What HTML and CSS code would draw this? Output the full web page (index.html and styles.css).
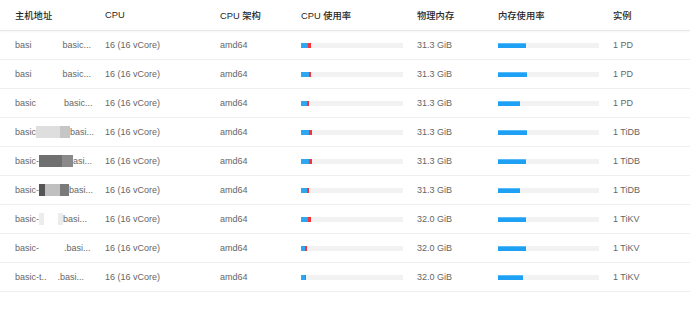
FILE: index.html
```html
<!DOCTYPE html>
<html lang="zh">
<head>
<meta charset="utf-8">
<title>Hosts</title>
<link rel="stylesheet" href="styles.css">
</head>
<body>
<div class="table">
  <div class="row head">
    <div class="cell first">主机地址</div>
    <div class="cell">CPU</div>
    <div class="cell">CPU 架构</div>
    <div class="cell">CPU 使用率</div>
    <div class="cell">物理内存</div>
    <div class="cell">内存使用率</div>
    <div class="cell">实例</div>
  </div>

  <div class="row">
    <div class="cell first host"><span>basi</span><span class="redact r-white w1"></span><span>basic...</span></div>
    <div class="cell">16 (16 vCore)</div>
    <div class="cell">amd64</div>
    <div class="cell"><div class="track cpu"><span class="seg blue" style="width:7px"></span><span class="seg red" style="width:3px"></span></div></div>
    <div class="cell">31.3 GiB</div>
    <div class="cell"><div class="track mem"><span class="seg mblue" style="width:28px"></span></div></div>
    <div class="cell">1 PD</div>
  </div>

  <div class="row">
    <div class="cell first host"><span>basi</span><span class="redact r-white w1"></span><span>basic...</span></div>
    <div class="cell">16 (16 vCore)</div>
    <div class="cell">amd64</div>
    <div class="cell"><div class="track cpu"><span class="seg blue" style="width:8px"></span><span class="seg red" style="width:2px"></span></div></div>
    <div class="cell">31.3 GiB</div>
    <div class="cell"><div class="track mem"><span class="seg mblue" style="width:29px"></span></div></div>
    <div class="cell">1 PD</div>
  </div>

  <div class="row">
    <div class="cell first host"><span>basic</span><span class="redact r-white w2"></span><span>basic...</span></div>
    <div class="cell">16 (16 vCore)</div>
    <div class="cell">amd64</div>
    <div class="cell"><div class="track cpu"><span class="seg blue" style="width:6px"></span><span class="seg red" style="width:2px"></span></div></div>
    <div class="cell">31.3 GiB</div>
    <div class="cell"><div class="track mem"><span class="seg mblue" style="width:22px"></span></div></div>
    <div class="cell">1 PD</div>
  </div>

  <div class="row">
    <div class="cell first host"><span>basic</span><span class="redact w3"><i class="px g-e0" style="width:24px"></i><i class="px g-c4" style="width:10px"></i></span><span>basi...</span></div>
    <div class="cell">16 (16 vCore)</div>
    <div class="cell">amd64</div>
    <div class="cell"><div class="track cpu"><span class="seg blue" style="width:8px"></span><span class="seg red" style="width:3px"></span></div></div>
    <div class="cell">31.3 GiB</div>
    <div class="cell"><div class="track mem"><span class="seg mblue" style="width:29px"></span></div></div>
    <div class="cell">1 TiDB</div>
  </div>

  <div class="row">
    <div class="cell first host"><span>basic-</span><span class="redact w4"><i class="px g-70" style="width:23px"></i><i class="px g-8a" style="width:11px"></i></span><span>asi...</span></div>
    <div class="cell">16 (16 vCore)</div>
    <div class="cell">amd64</div>
    <div class="cell"><div class="track cpu"><span class="seg blue" style="width:8px"></span><span class="seg red" style="width:3px"></span></div></div>
    <div class="cell">31.3 GiB</div>
    <div class="cell"><div class="track mem"><span class="seg mblue" style="width:28px"></span></div></div>
    <div class="cell">1 TiDB</div>
  </div>

  <div class="row">
    <div class="cell first host"><span>basic-</span><span class="redact w5"><i class="px g-55" style="width:6px"></i><i class="px g-bf" style="width:15px"></i><i class="px g-78" style="width:9px"></i></span><span>basi...</span></div>
    <div class="cell">16 (16 vCore)</div>
    <div class="cell">amd64</div>
    <div class="cell"><div class="track cpu"><span class="seg blue" style="width:6px"></span><span class="seg red" style="width:2px"></span></div></div>
    <div class="cell">31.3 GiB</div>
    <div class="cell"><div class="track mem"><span class="seg mblue" style="width:22px"></span></div></div>
    <div class="cell">1 TiDB</div>
  </div>

  <div class="row">
    <div class="cell first host"><span>basic-</span><span class="redact w6"><i class="px g-ea" style="width:5px"></i><i class="px g-fff" style="width:14px"></i><i class="px g-ea" style="width:5px"></i></span><span>basi...</span></div>
    <div class="cell">16 (16 vCore)</div>
    <div class="cell">amd64</div>
    <div class="cell"><div class="track cpu"><span class="seg blue" style="width:7px"></span><span class="seg red" style="width:3px"></span></div></div>
    <div class="cell">32.0 GiB</div>
    <div class="cell"><div class="track mem"><span class="seg mblue" style="width:28px"></span></div></div>
    <div class="cell">1 TiKV</div>
  </div>

  <div class="row">
    <div class="cell first host"><span>basic-</span><span class="redact r-white w7"></span><span>.basi...</span></div>
    <div class="cell">16 (16 vCore)</div>
    <div class="cell">amd64</div>
    <div class="cell"><div class="track cpu"><span class="seg blue" style="width:4px"></span><span class="seg red" style="width:2px"></span></div></div>
    <div class="cell">32.0 GiB</div>
    <div class="cell"><div class="track mem"><span class="seg mblue" style="width:28px"></span></div></div>
    <div class="cell">1 TiKV</div>
  </div>

  <div class="row">
    <div class="cell first host"><span>basic-t..</span><span class="redact r-white w8"></span><span>.basi...</span></div>
    <div class="cell">16 (16 vCore)</div>
    <div class="cell">amd64</div>
    <div class="cell"><div class="track cpu"><span class="seg blue" style="width:4px"></span><span class="seg purple" style="width:1px"></span></div></div>
    <div class="cell">32.0 GiB</div>
    <div class="cell"><div class="track mem"><span class="seg mblue" style="width:25px"></span></div></div>
    <div class="cell">1 TiKV</div>
  </div>
</div>
</body>
</html>
```

FILE: styles.css
```css
html, body {
  margin: 0;
  padding: 0;
  background: #ffffff;
}

body {
  font-family: "Liberation Sans", "Noto Sans CJK SC", Arial, sans-serif;
  font-size: 9px;
  color: #666666;
}

.table {
  width: 690px;
}

.row {
  display: grid;
  grid-template-columns: 105px 115px 81px 116px 81px 115px 1fr;
  height: 28px;
  align-items: center;
  border-bottom: 1px solid #efefef;
}

.row.head {
  height: 30px;
  color: #262626;
  font-size: 9.3px;
  font-weight: 500;
  border-bottom: 1px solid #e8e8e8;
  box-shadow: 0 1px 2px rgba(0, 0, 0, 0.04);
}

.cell {
  white-space: nowrap;
  overflow: hidden;
}

.cell.first {
  padding-left: 15px;
}

.host {
  display: flex;
  align-items: center;
}

.redact {
  display: inline-flex;
  height: 12px;
  flex: none;
}

.redact.r-white {
  background: #ffffff;
}

.w1 { width: 31px; }
.w2 { width: 28px; }
.w3 { width: 34px; }
.w4 { width: 34px; }
.w5 { width: 30px; }
.w6 { width: 24px; }
.w7 { width: 25px; }
.w8 { width: 11px; }

.px {
  display: block;
  height: 12px;
}

.g-e0 { background: #dedede; }
.g-c4 { background: #c6c6c6; }
.g-70 { background: #707070; }
.g-8a { background: #8a8a8a; }
.g-55 { background: #555555; }
.g-bf { background: #c0c0c0; }
.g-78 { background: #7a7a7a; }
.g-ea { background: #ececec; }
.g-fff { background: #ffffff; }

.track {
  display: flex;
  height: 5px;
  background: #f2f2f2;
}

.track.cpu {
  width: 102px;
}

.track.mem {
  width: 101px;
}

.seg {
  display: block;
  height: 5px;
}

.seg.blue {
  background: #2ea6f2;
}

.seg.red {
  background: #f7333a;
}

.seg.purple {
  background: #b0607a;
}

.seg.mblue {
  background: #1ea0f5;
  box-shadow: inset 0 1px 0 #58bbf7;
}
```
